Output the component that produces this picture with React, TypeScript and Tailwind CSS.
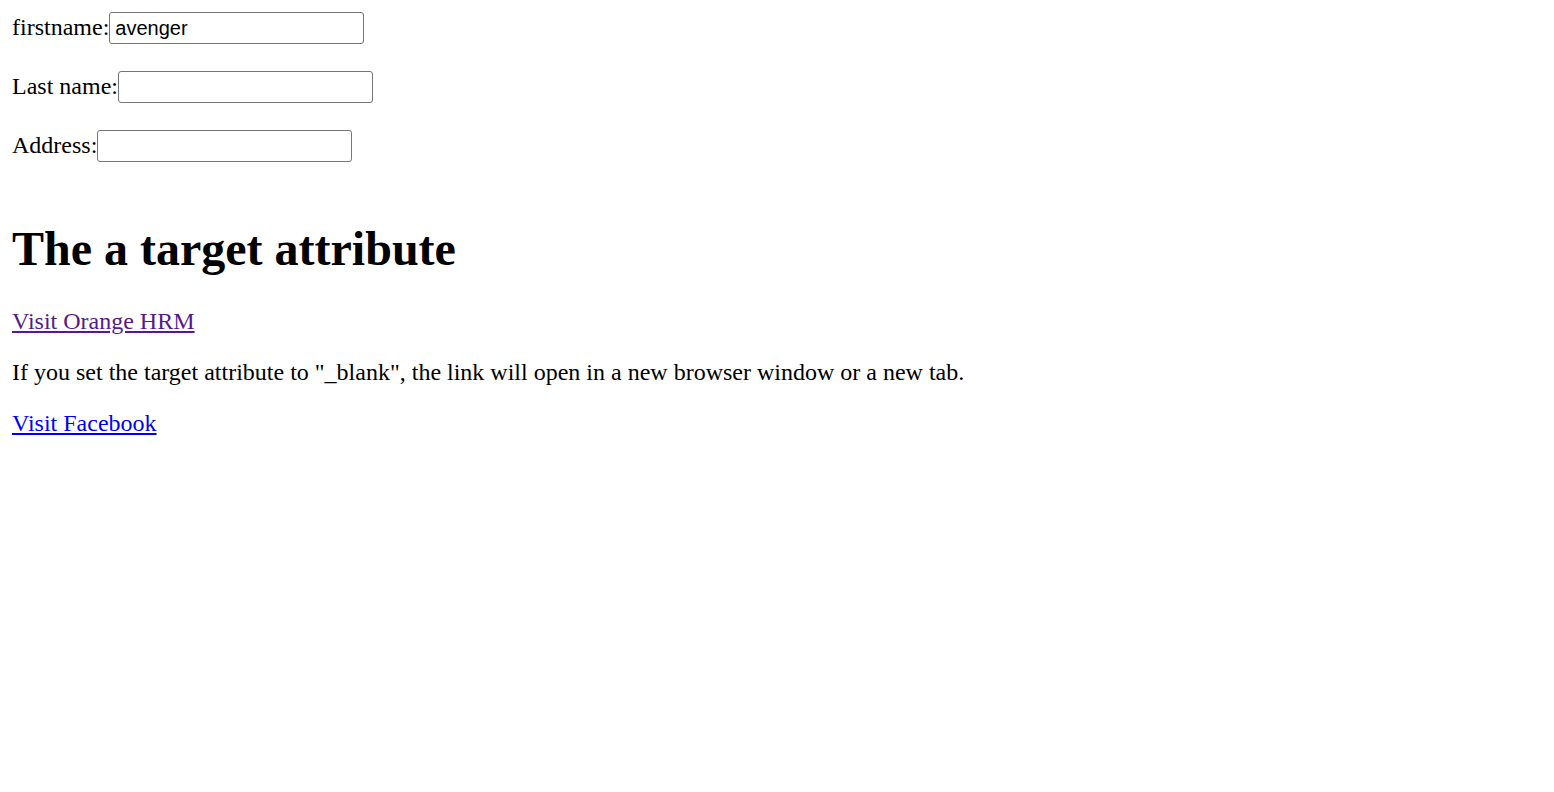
const serif = "font-['Liberation_Serif','Times_New_Roman',serif]";

type FieldRowProps = {
  label: string;
  value?: string;
  first?: boolean;
};

const FieldRow = ({ label, value, first }: FieldRowProps) => {
  return (
    <div className={`flex items-baseline ${first ? "" : "mt-[27px]"}`}>
      <span className="text-[24px] leading-[27.6px]">{label}</span>
      <input
        type="text"
        defaultValue={value}
        className="w-[255px] h-[32px] border border-[#767676] rounded-[3px] pl-[5px] pr-[3px] text-[20px] text-black font-['Liberation_Sans',Arial,sans-serif] outline-none"
      />
    </div>
  );
};

export default function App() {
  return (
    <div className={`${serif} bg-white text-black min-h-screen px-[12px] pt-[12px]`}>
      <FieldRow label="firstname:" value="avenger" first />
      <FieldRow label="Last name:" />
      <FieldRow label="Address:" />

      <h1 className="mt-[59px] text-[48px] font-bold leading-[55.2px]">
        The a target attribute
      </h1>

      <p className="mt-[32px] text-[24px] leading-[27.6px]">
        <a href="#" className="text-[#551a8b] underline">
          Visit Orange HRM
        </a>
      </p>
      <p className="mt-[23px] text-[24px] leading-[27.6px]">
        If you set the target attribute to "_blank", the link will open in a
        new browser window or a new tab.
      </p>
      <p className="mt-[24px] text-[24px] leading-[27.6px]">
        <a href="#" className="text-[#0000ee] underline">
          Visit Facebook
        </a>
      </p>
    </div>
  );
}
